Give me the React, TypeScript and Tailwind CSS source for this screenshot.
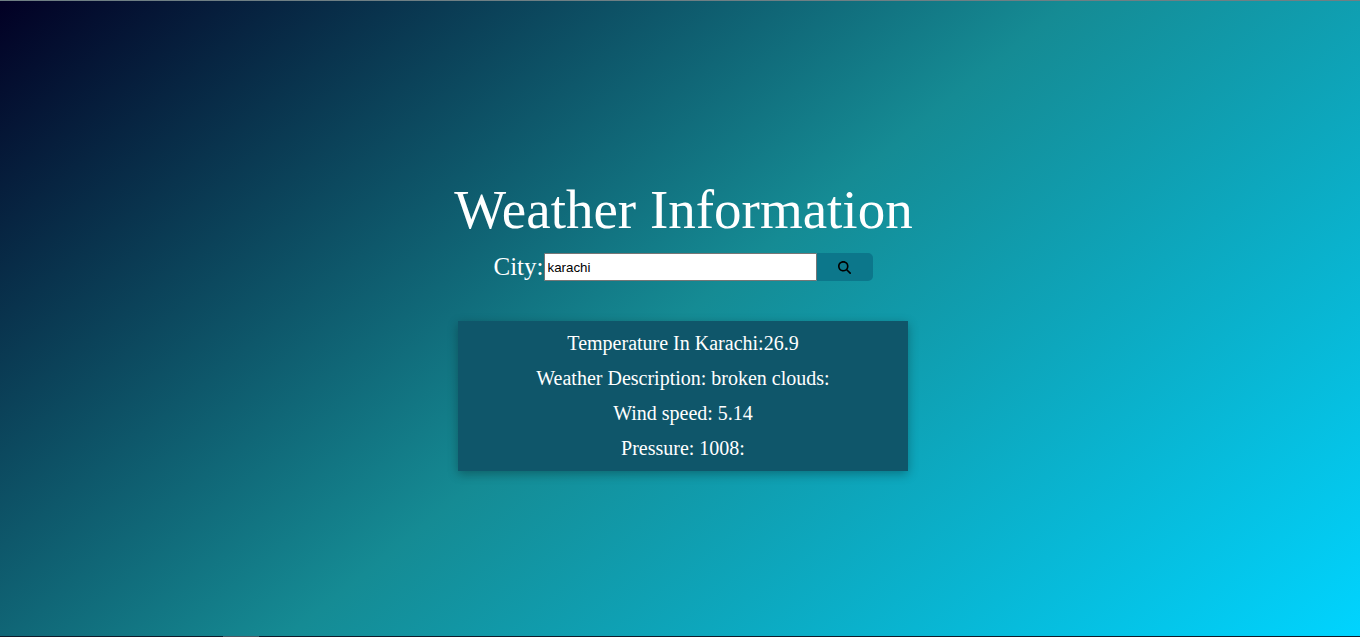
import React from "react";
import { FaMagnifyingGlass } from "react-icons/fa6";

const lines = [
  "Temperature In Karachi:26.9",
  "Weather Description: broken clouds:",
  "Wind speed: 5.14",
  "Pressure: 1008:",
];

export default function App() {
  return (
    <div className="flex h-[637px] w-full flex-col overflow-hidden bg-[#101c2b] font-['Liberation_Serif',serif] text-white">
      <main className="flex h-[636px] flex-col items-center border-t border-[#6f7f84] bg-[linear-gradient(141deg,#020024_0%,#158b94_50%,#00d4ff_100%)] pl-[6px]">
        <h1 className="mt-[177px] pl-px text-[55px] leading-[64px]">Weather Information</h1>
        <div className="mt-[11px] flex h-7 items-center">
          <label htmlFor="city" className="text-[25px] leading-7">City:</label>
          <input
            id="city"
            defaultValue="karachi"
            className="h-7 w-[273px] rounded-[1px] border border-[#767676] bg-white px-[3px] font-['Liberation_Sans',sans-serif] text-[13.333px] text-black outline-none"
          />
          <button aria-label="Search" className="flex h-7 w-14 items-center justify-center rounded-r-[5px] bg-[#0c778b] pr-px text-black">
            <FaMagnifyingGlass size={13} />
          </button>
        </div>
        <div className="mt-10 flex h-[150px] w-[450px] flex-col items-center bg-[#0f566a] pt-[5px] text-[20px] leading-[35px] shadow-[0_3px_10px_rgba(0,0,0,0.3)]">
          {lines.map((line) => (
            <p key={line}>{line}</p>
          ))}
        </div>
      </main>
      <div className="ml-[223px] h-px w-9 bg-[#4b5964]" />
    </div>
  );
}
